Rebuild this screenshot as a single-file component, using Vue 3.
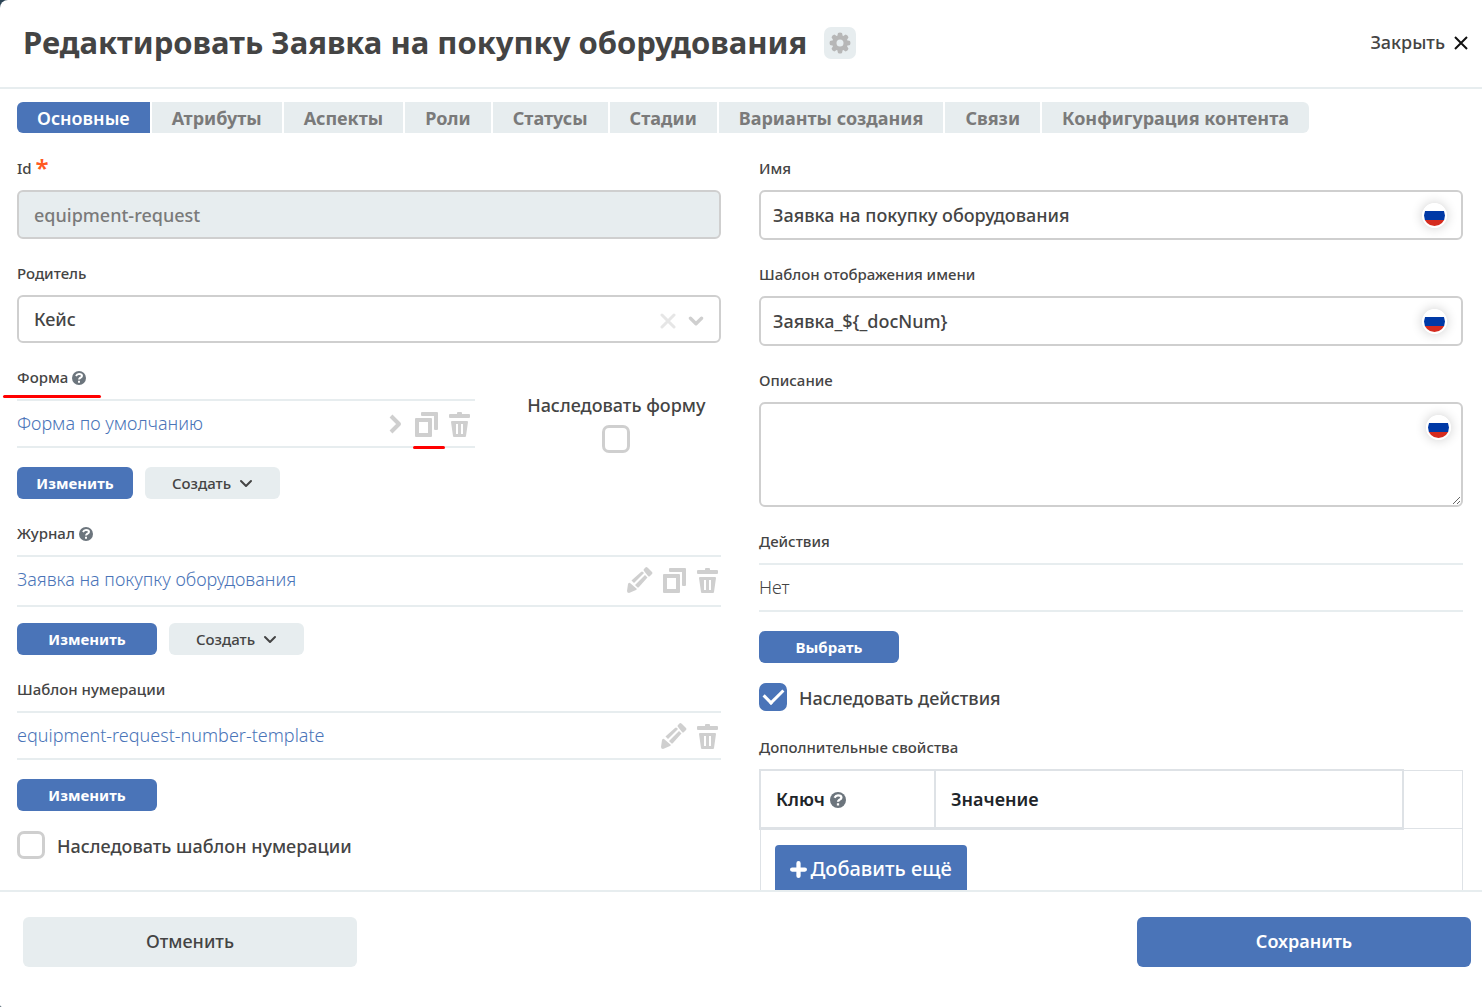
<script setup>
import { ref } from 'vue'

const tabs = [
  'Основные',
  'Атрибуты',
  'Аспекты',
  'Роли',
  'Статусы',
  'Стадии',
  'Варианты создания',
  'Связи',
  'Конфигурация контента',
]
const activeTab = ref('Основные')

const form = ref({
  id: 'equipment-request',
  parent: 'Кейс',
  name: 'Заявка на покупку оборудования',
  nameTemplate: 'Заявка_${_docNum}',
  description: '',
  inheritForm: false,
  inheritNumber: false,
  inheritActions: true,
})
</script>

<template>
  <!-- shared icon shapes -->
  <svg class="sprite" aria-hidden="true">
    <symbol id="i-copy" viewBox="0 0 24 26">
      <path fill-rule="evenodd" d="M1 7h15q1 0 1 1v17q0 1-1 1H1q-1 0-1-1V8q0-1 1-1zm3 4v11h9V11z" />
      <path d="M7 1h15q1 0 1 1v16q0 1-1 1h-2q-1 0-1-1V5H7q-1 0-1-1V2q0-1 1-1z" />
    </symbol>
    <symbol id="i-trash" viewBox="0 0 22 26">
      <path d="M1 3h7V2q0-1 1-1h3q1 0 1 1v1h7q1 0 1 1v2q0 1-1 1H1Q0 7 0 6V4q0-1 1-1z" />
      <path fill-rule="evenodd" d="M3 10h15q1 0 1 1l-2 14q0 1-1 1H5q-1 0-1-1L2 11q0-1 1-1zM7 13v10h2V13zm5 0v10h2V13z" />
    </symbol>
    <symbol id="i-pencil" viewBox="0 0 26 26">
      <path d="M17 2l2-2q1-0 2 1l4 4q1 1 0 2l-2 2q-1 1-2 0l-4-5q-1-1 0-2z" />
      <path d="M14 5q1-1 2 0l1 1-10 10-2-2q-1-1 0-1zM18 8l2 2q1 1 0 1l-8 9q-1 1-2 0l-2-2z" />
      <path d="M3 16l7 6-1 1-7 3q-2 0-2-2l1-7q1-2 2-1z" />
    </symbol>
    <symbol id="i-help" viewBox="0 0 14 14">
      <circle cx="7" cy="7" r="7" />
      <path d="M4 5Q5 3 7 3q3 0 3 2 0 1-2 2-1 1-1 1.500M7 9.800v2" fill="none" stroke="#fff" stroke-width="2" />
    </symbol>
    <symbol id="i-chevron" viewBox="0 0 14 9">
      <path d="M2 2l5 5 5-5" fill="none" stroke="currentColor" stroke-linecap="round" stroke-linejoin="round" />
    </symbol>
    <symbol id="i-flag" viewBox="0 0 25 25">
      <clipPath id="flag-disc"><circle cx="12.500" cy="12.500" r="10.500" /></clipPath>
      <circle cx="12.500" cy="12.500" r="12.500" fill="#fff" />
      <g clip-path="url(#flag-disc)">
        <path fill="#0039a6" d="M0 8h25v9H0z" />
        <path fill="#d52b1e" d="M0 17h25v8H0z" />
      </g>
    </symbol>
  </svg>

  <div class="backdrop">
    <section class="modal" role="dialog" aria-labelledby="dialog-title">
      <header class="header">
        <h1 id="dialog-title">Редактировать Заявка на покупку оборудования</h1>
        <button class="gear" type="button" aria-label="Настройки">
          <svg width="22" height="22" viewBox="-11 -11 22 22">
            <g fill="#b7b7b7">
              <path
                v-for="n in 8"
                :key="n"
                :transform="`rotate(${n * 45})`"
                d="M-3-6l1-4q2-1 4 0l1 4z"
              />
            </g>
            <circle r="5.500" fill="none" stroke="#b7b7b7" stroke-width="4" />
          </svg>
        </button>
        <button class="close" type="button">
          <span>Закрыть</span>
          <svg width="14" height="14" viewBox="0 0 14 14">
            <path d="M1 1l12 12m0-12L1 13" stroke="#111" stroke-width="2" />
          </svg>
        </button>
      </header>

      <main class="content">
        <nav class="tabs">
          <button
            v-for="tab in tabs"
            :key="tab"
            type="button"
            :class="{ active: tab === activeTab }"
            @click="activeTab = tab"
          >{{ tab }}</button>
        </nav>

        <div class="columns">
          <div class="column">
            <div class="field">
              <label class="label" for="f-id">Id <span class="required">*</span></label>
              <input id="f-id" v-model="form.id" class="control" type="text" disabled>
            </div>

            <div class="field">
              <label class="label" for="f-parent">Родитель</label>
              <div class="holder">
                <select id="f-parent" v-model="form.parent" class="control">
                  <option>Кейс</option>
                </select>
                <span class="select-icons">
                  <svg width="16" height="16" viewBox="0 0 16 16">
                    <path d="M2 2l12 12m0-12L2 14" stroke="#e6e6e6" stroke-width="3" stroke-linecap="round" />
                  </svg>
                  <svg class="chevron-thick" width="16" height="10"><use href="#i-chevron" /></svg>
                </span>
              </div>
            </div>

            <div class="split">
              <div class="field">
                <div class="label marked">
                  Форма <svg class="help" width="14" height="14"><use href="#i-help" /></svg>
                </div>
                <div class="item">
                  <a href="#">Форма по умолчанию</a>
                  <span class="actions">
                    <button type="button" aria-label="Открыть">
                      <svg width="16" height="20" viewBox="0 0 16 20">
                        <path d="M2 2l8 8-8 8" fill="none" stroke="currentColor" stroke-width="4" stroke-linejoin="round" />
                      </svg>
                    </button>
                    <button class="marked-icon" type="button" aria-label="Копировать">
                      <svg width="24" height="26"><use href="#i-copy" /></svg>
                    </button>
                    <button type="button" aria-label="Удалить">
                      <svg width="22" height="26"><use href="#i-trash" /></svg>
                    </button>
                  </span>
                </div>
                <div class="buttons">
                  <button class="btn primary compact" type="button">Изменить</button>
                  <button class="btn create" type="button">
                    Создать <svg width="14" height="9"><use href="#i-chevron" /></svg>
                  </button>
                </div>
              </div>
              <label class="inherit-form">
                Наследовать форму
                <input v-model="form.inheritForm" class="check" type="checkbox">
              </label>
            </div>

            <div class="field">
              <div class="label">
                Журнал <svg class="help" width="14" height="14"><use href="#i-help" /></svg>
              </div>
              <div class="item tall">
                <a href="#">Заявка на покупку оборудования</a>
                <span class="actions">
                  <button type="button" aria-label="Изменить журнал">
                    <svg width="26" height="26"><use href="#i-pencil" /></svg>
                  </button>
                  <button type="button" aria-label="Копировать журнал">
                    <svg width="24" height="26"><use href="#i-copy" /></svg>
                  </button>
                  <button type="button" aria-label="Удалить журнал">
                    <svg width="22" height="26"><use href="#i-trash" /></svg>
                  </button>
                </span>
              </div>
              <div class="buttons">
                <button class="btn primary" type="button">Изменить</button>
                <button class="btn create" type="button">
                  Создать <svg width="14" height="9"><use href="#i-chevron" /></svg>
                </button>
              </div>
            </div>

            <div class="field">
              <div class="label">Шаблон нумерации</div>
              <div class="item">
                <a href="#">equipment-request-number-template</a>
                <span class="actions">
                  <button type="button" aria-label="Изменить шаблон">
                    <svg width="26" height="26"><use href="#i-pencil" /></svg>
                  </button>
                  <button type="button" aria-label="Удалить шаблон">
                    <svg width="22" height="26"><use href="#i-trash" /></svg>
                  </button>
                </span>
              </div>
              <div class="buttons">
                <button class="btn primary" type="button">Изменить</button>
              </div>
              <label class="inherit">
                <input v-model="form.inheritNumber" class="check" type="checkbox">
                Наследовать шаблон нумерации
              </label>
            </div>
          </div>

          <div class="column">
            <div class="field">
              <label class="label" for="f-name">Имя</label>
              <div class="holder">
                <input id="f-name" v-model="form.name" class="control localized" type="text">
                <svg class="flag" width="25" height="25"><use href="#i-flag" /></svg>
              </div>
            </div>

            <div class="field">
              <label class="label" for="f-template">Шаблон отображения имени</label>
              <div class="holder">
                <input id="f-template" v-model="form.nameTemplate" class="control localized" type="text">
                <svg class="flag" width="25" height="25"><use href="#i-flag" /></svg>
              </div>
            </div>

            <div class="field">
              <label class="label" for="f-description">Описание</label>
              <div class="holder">
                <textarea id="f-description" v-model="form.description" class="control localized"></textarea>
                <svg class="flag corner" width="25" height="25"><use href="#i-flag" /></svg>
              </div>
            </div>

            <div class="field">
              <div class="label">Действия</div>
              <div class="item"><span>Нет</span></div>
              <div class="buttons">
                <button class="btn primary" type="button">Выбрать</button>
              </div>
              <label class="inherit">
                <input v-model="form.inheritActions" class="check" type="checkbox">
                Наследовать действия
              </label>
            </div>

            <div class="field">
              <div class="label">Дополнительные свойства</div>
              <table class="props">
                <thead>
                  <tr>
                    <th class="key">
                      Ключ <svg class="help" width="16" height="16"><use href="#i-help" /></svg>
                    </th>
                    <th>Значение</th>
                    <td class="tools"></td>
                  </tr>
                </thead>
                <tbody>
                  <tr>
                    <td colspan="3">
                      <button class="add" type="button">
                        <svg width="17" height="17" viewBox="0 0 16 16">
                          <path d="M2 8h12M8 2v12" stroke="#fff" stroke-width="4" stroke-linecap="round" />
                        </svg>
                        Добавить ещё
                      </button>
                    </td>
                  </tr>
                </tbody>
              </table>
            </div>
          </div>
        </div>
      </main>

      <footer class="footer">
        <button type="button">Отменить</button>
        <button class="save" type="button">Сохранить</button>
      </footer>
    </section>
  </div>
</template>

<style>
body {
  margin: 0;
  background: #2c4456;
}
</style>

<style scoped>
* {
  box-sizing: border-box;
}

button {
  padding: 0;
  border: 0;
  background: none;
  color: inherit;
  font: inherit;
  cursor: pointer;
}

.sprite {
  position: absolute;
  width: 0;
  height: 0;
}

.backdrop {
  height: 100vh;
  color: #444;
  font: 500 18px/24px "Noto Sans", "Open Sans", sans-serif;
}

.modal {
  display: flex;
  flex-direction: column;
  height: 100%;
  border-radius: 8px 0 0 2px;
  background: #fff;
}

.header {
  display: flex;
  align-items: center;
  gap: 17px;
  padding: 23px 14px 24px 23px;
  border-bottom: 2px solid #e7edef;
}

h1 {
  margin: 0;
  padding-bottom: 2px;
  font-size: 31px;
  font-weight: 700;
  line-height: 38px;
}

.gear {
  display: grid;
  place-items: center;
  width: 32px;
  height: 32px;
  border-radius: 7px;
  background: #e7edef;
}

.close {
  display: flex;
  align-items: center;
  gap: 9px;
  margin-left: auto;
}

.close span {
  padding-bottom: 2px;
}

.content {
  flex: 1;
  min-height: 0;
  padding: 13px 19px 0 17px;
  overflow: hidden;
}

.tabs {
  display: flex;
  gap: 2px;
}

.tabs button {
  height: 31px;
  padding: 0 20px;
  background: #e7edef;
  color: #7a7a7a;
  font-weight: 700;
}

.tabs button:first-child {
  border-radius: 6px 0 0 6px;
}

.tabs button:last-child {
  border-radius: 0 6px 6px 0;
}

.tabs .active {
  background: #4a74b8;
  color: #fff;
  font-weight: 600;
}

.columns {
  display: grid;
  grid-template-columns: 1fr 1fr;
  gap: 38px;
  margin-top: 25px;
}

.column {
  display: flex;
  flex-direction: column;
  gap: 24px;
  min-width: 0;
}

.label {
  display: block;
  height: 22px;
  margin-bottom: 10px;
  font-size: 15px;
  line-height: 20px;
}

.required {
  color: #ff5a1f;
  font-size: 24px;
  font-weight: 600;
  line-height: 0;
  vertical-align: -3px;
}

.help {
  vertical-align: -2px;
  fill: #6c757d;
}

.holder {
  position: relative;
}

.control {
  display: block;
  width: 100%;
  height: 49px;
  padding: 0 15px;
  border: 2px solid #cfcfcf;
  border-radius: 6px;
  outline: 0;
  appearance: none;
  background: #fff;
  color: #444;
  font: inherit;
}

.control:disabled {
  background: #e7edef;
  color: #7a7a7a;
}

select.control {
  height: 48px;
}

.localized {
  height: 50px;
  padding: 0 60px 0 12px;
}

textarea.control {
  height: 105px;
  padding: 10px 60px 10px 12px;
  resize: vertical;
}

.select-icons {
  position: absolute;
  top: 0;
  right: 17px;
  display: flex;
  align-items: center;
  gap: 12px;
  height: 100%;
  padding-top: 4px;
  pointer-events: none;
}

.chevron-thick {
  color: #cfcfcf;
  stroke-width: 3;
}

.flag {
  position: absolute;
  top: 13px;
  right: 16px;
  border-radius: 50%;
  box-shadow: 0 0 12px #0003;
}

.corner {
  right: 12px;
}

.split {
  display: flex;
  gap: 37px;
}

.split .field {
  width: 65%;
}

.split .actions {
  margin-right: 4px;
}

.inherit-form {
  display: flex;
  flex: 1;
  flex-direction: column;
  align-items: center;
  gap: 8px;
  padding-top: 26px;
}

.item {
  display: flex;
  align-items: center;
  justify-content: space-between;
  height: 49px;
  margin-bottom: 19px;
  border: solid #e7edef;
  border-width: 2px 0;
  font-weight: 300;
}

.item > :first-child {
  padding-bottom: 2px;
}

.tall {
  height: 52px;
  margin-bottom: 16px;
  padding-bottom: 2px;
}

.item a {
  color: #4a74b8;
  text-decoration: none;
}

.actions {
  display: flex;
  align-items: center;
  gap: 10px;
  margin-right: 2px;
  color: #cfcfcf;
}

.actions button {
  display: flex;
}

.actions svg {
  fill: currentColor;
}

.marked,
.marked-icon {
  position: relative;
}

.marked::after,
.marked-icon::after {
  position: absolute;
  height: 3px;
  border-radius: 2px;
  background: #f00;
  content: "";
}

.marked::after {
  top: 28px;
  left: -14px;
  width: 98px;
}

.marked-icon::after {
  top: 35px;
  left: -2px;
  width: 32px;
}

.buttons {
  display: flex;
  gap: 12px;
}

.btn {
  display: flex;
  align-items: center;
  justify-content: center;
  height: 32px;
  border-radius: 6px;
  font-size: 15px;
}

.primary {
  width: 140px;
  background: #4a74b8;
  color: #fff;
  font-weight: 700;
}

.compact {
  width: 116px;
}

.create {
  gap: 8px;
  width: 135px;
  background: #e7edef;
  stroke-width: 2;
}

.inherit {
  display: flex;
  gap: 12px;
  height: 30px;
  margin-top: 20px;
  line-height: 30px;
}

.check {
  display: grid;
  place-items: center;
  width: 28px;
  height: 28px;
  margin: 0;
  border: 3px solid #cfcfcf;
  border-radius: 7px;
  appearance: none;
}

.check:checked {
  border-color: #4a74b8;
  background: #4a74b8;
}

.check:checked::after {
  width: 16px;
  height: 9px;
  border: solid #fff;
  border-width: 0 0 3px 3px;
  content: "";
  transform: translateY(-3px) rotate(-45deg);
}

.props {
  width: 100%;
  border-collapse: collapse;
  color: #212529;
  table-layout: fixed;
}

.props th,
.props td {
  padding: 15px 14px;
  border: 1px solid #dee2e6;
  text-align: left;
}

.props th {
  padding: 16px 15px;
  border-width: 2px 2px 3px;
  font-weight: 600;
}

.key {
  width: 175px;
}

.tools {
  width: 60px;
}

.add {
  display: flex;
  align-items: center;
  gap: 4px;
  height: 48px;
  padding: 0 15px;
  border-radius: 4px;
  background: #4a74b8;
  color: #fff;
  font-size: 20px;
}

.footer {
  display: flex;
  justify-content: space-between;
  padding: 25px 11px 40px 23px;
  border-top: 2px solid #e7edef;
}

.footer button {
  width: 334px;
  height: 50px;
  padding-bottom: 2px;
  border-radius: 6px;
  background: #e7edef;
}

.footer .save {
  background: #4a74b8;
  color: #fff;
  font-weight: 600;
}
</style>
